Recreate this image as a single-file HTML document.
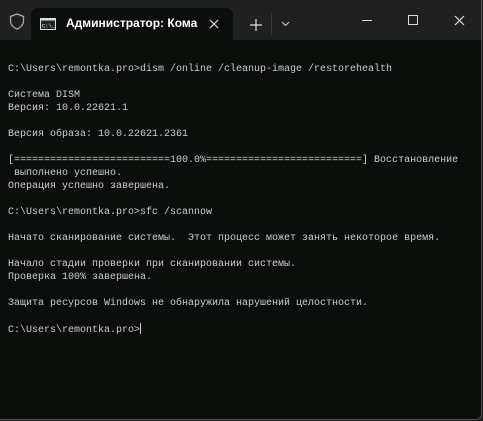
<!DOCTYPE html>
<html><head><meta charset="utf-8"><style>
html,body{margin:0;padding:0;width:483px;height:421px;overflow:hidden;background:#1f1f1f}
.win{position:absolute;left:0;top:0;width:481px;height:419px;background:#0b0f0c;border-right:1px solid #2a5a7a;border-bottom:1px solid #2a5a7a;border-radius:0 0 6px 0;overflow:hidden}
.tb{position:absolute;left:0;top:0;width:481px;height:40px;background:#202020}
.tab{position:absolute;left:31px;top:8px;width:202px;height:32px;background:#0b0f0c;border-radius:7px 7px 0 0}
.tab .t{position:absolute;left:35px;top:8px;color:#fff;font:bold 12px "Liberation Sans",sans-serif}
pre{position:absolute;left:8px;top:63px;margin:0;color:#cccccc;font:10px/13px "Liberation Mono",monospace}
.cur{display:inline-block;width:1px;height:11px;background:#ccc;vertical-align:-2px}
svg{position:absolute}
</style></head><body><div class="win">
<div class="tb">
<svg style="left:9px;top:13px" width="16" height="17" viewBox="0 0 16 17"><path d="M8 1 L14.5 3.5 V8 C14.5 12 11 15 8 16 C5 15 1.5 12 1.5 8 V3.5 Z" fill="none" stroke="#aaa" stroke-width="1.3"/></svg>
<div class="tab">
<svg style="left:9px;top:10px" width="16" height="12" viewBox="0 0 16 12"><rect x="0.5" y="0.5" width="15" height="11" fill="#222" stroke="#ddd"/><rect x="0.5" y="0.5" width="15" height="2" fill="#ddd"/><text x="2" y="9.5" font-size="5.5" fill="#fff" font-family="Liberation Mono">C:\_</text></svg>
<div class="t">Администратор: Кома</div>
<svg style="left:178px;top:11px" width="10" height="10"><path d="M1 1L9 9M9 1L1 9" stroke="#ddd" stroke-width="1.2"/></svg>
</div>
<svg style="left:250px;top:19px" width="12" height="12"><path d="M6 0V12M0 6H12" stroke="#ddd" stroke-width="1.2"/></svg>
<div style="position:absolute;left:271px;top:13px;width:1px;height:22px;background:#3a3a3a"></div>
<svg style="left:281px;top:21px" width="9" height="6"><path d="M1 1L4.5 4.5L8 1" stroke="#ccc" fill="none" stroke-width="1.1"/></svg>
<div style="position:absolute;left:362px;top:20px;width:10px;height:1px;background:#ddd"></div>
<div style="position:absolute;left:408px;top:15px;width:8px;height:8px;border:1.2px solid #ddd"></div>
<svg style="left:454px;top:15px" width="11" height="11"><path d="M1 1L10 10M10 1L1 10" stroke="#ddd" stroke-width="1.2"/></svg>
</div>
<pre>C:\Users\remontka.pro&gt;dism /online /cleanup-image /restorehealth

Система DISM
Версия: 10.0.22621.1

Версия образа: 10.0.22621.2361

[==========================100.0%==========================] Восстановление
 выполнено успешно.
Операция успешно завершена.

C:\Users\remontka.pro&gt;sfc /scannow

Начато сканирование системы.  Этот процесс может занять некоторое время.

Начало стадии проверки при сканировании системы.
Проверка 100% завершена.

Защита ресурсов Windows не обнаружила нарушений целостности.

C:\Users\remontka.pro&gt;<span class="cur"></span></pre>
</div></body></html>
